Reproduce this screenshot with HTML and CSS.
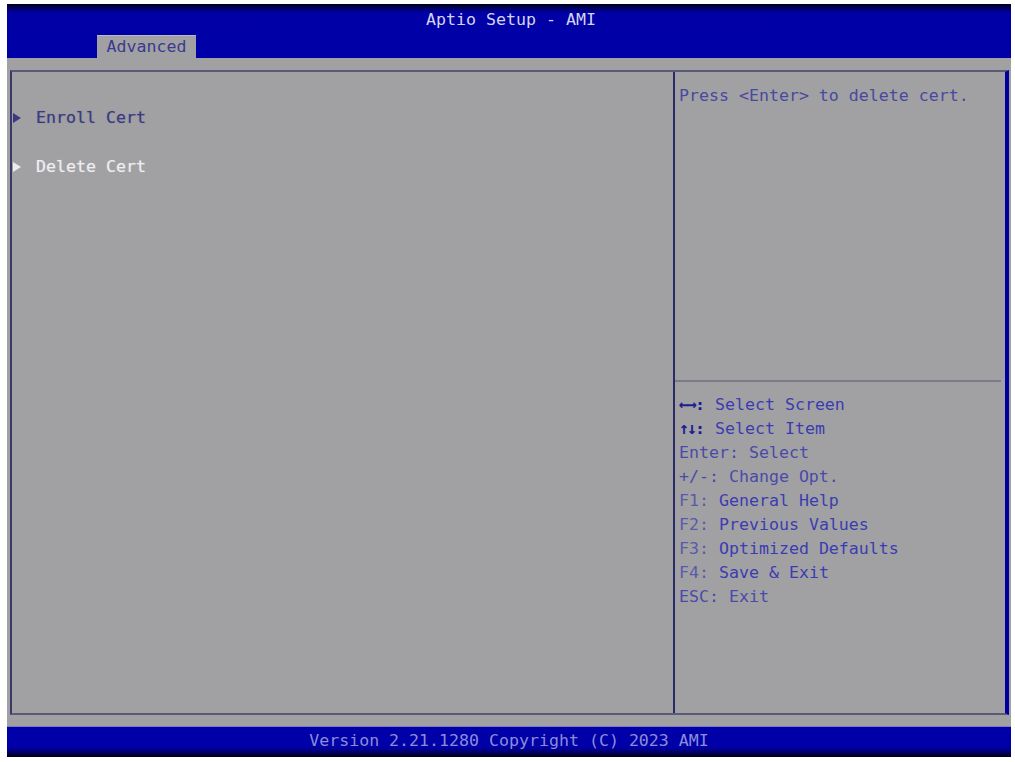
FILE: index.html
```html
<!DOCTYPE html>
<html lang="en">
<head>
    <meta charset="UTF-8">
    <meta name="viewport" content="width=device-width, initial-scale=1.0">
    <title>Aptio Setup - AMI</title>
    <link rel="stylesheet" href="styles.css">
</head>
<body>
    <div class="screen">
        <header class="topbar">
            <div class="title">Aptio Setup - AMI</div>
            <div class="tabs">
                <span class="tab active">Advanced</span>
            </div>
        </header>
        <main class="body">
            <div class="panel">
                <section class="menu">
                    <div class="item">
                        <svg class="arrow" viewBox="0 0 8 10"><path d="M0 0L8 5L0 10z"/></svg>
                        Enroll Cert
                    </div>
                    <div class="item selected">
                        <svg class="arrow" viewBox="0 0 8 10"><path d="M0 0L8 5L0 10z"/></svg>
                        Delete Cert
                    </div>
                </section>
                <aside class="side">
                    <div class="help">Press &lt;Enter&gt; to delete cert.</div>
                    <div class="keys">
                        <div><span class="k">&#8592;&#8594;:</span> Select Screen</div>
                        <div><span class="k">&#8593;&#8595;:</span> Select Item</div>
                        <div class="plain">Enter: Select</div>
                        <div class="plain">+/-: Change Opt.</div>
                        <div><span class="k2">F1:</span> General Help</div>
                        <div><span class="k2">F2:</span> Previous Values</div>
                        <div><span class="k2">F3:</span> Optimized Defaults</div>
                        <div><span class="k2">F4:</span> Save &amp; Exit</div>
                        <div class="plain">ESC: Exit</div>
                    </div>
                </aside>
            </div>
        </main>
        <footer class="bottombar">Version 2.21.1280 Copyright (C) 2023 AMI</footer>
    </div>
</body>
</html>
```

FILE: styles.css
```css
body {
    margin: 0;
    background: #FFFFFF;
    font-family: 'DejaVu Sans Mono', 'Liberation Mono', monospace;
    font-size: 16.6px;
}
.screen {
    width: 1004px;
    height: 753px;
    margin: 4px 0 0 7px;
    display: flex;
    flex-direction: column;
    background: #A1A1A4;
}
.topbar {
    height: 54px;
    background: linear-gradient(#000010 0, #000060 4px, #0000A6 9px, #0000A8 100%);
    display: flex;
    flex-direction: column;
    justify-content: space-between;
}
.title {
    text-align: center;
    color: #D4D4EE;
    line-height: 24px;
    padding-top: 4px;
    padding-left: 4px;
}
.tabs {
    display: flex;
    padding-left: 90px;
}
.tab {
    width: 99px;
    height: 23px;
    line-height: 24px;
    text-align: center;
    color: #3A3A90;
    background: #A1A1A4;
    box-shadow: inset 0 1px 0 #B8B8C8;
}
.body {
    flex: 1;
    padding: 12px 2px 12px 3px;
    display: flex;
}
.panel {
    flex: 1;
    display: grid;
    grid-template-columns: 663px 1fr;
    border-top: 2px solid #5A5A78;
    border-left: 2px solid #3A3A66;
    border-bottom: 2px solid #5A5A78;
    border-right: 4px solid #0000A0;
}
.menu {
    border-right: 2px solid #2A2A66;
    padding-top: 34px;
    display: flex;
    flex-direction: column;
    gap: 25px;
}
.item {
    display: flex;
    align-items: center;
    gap: 15px;
    padding-left: 1px;
    line-height: 24px;
    color: #3A3A82;
    text-shadow: 0 0 1px rgba(58, 58, 130, 0.5);
}
.item.selected {
    color: #EDEDF0;
    text-shadow: 0 0 1px rgba(255, 255, 255, 0.5);
}
.arrow {
    width: 8px;
    height: 10px;
    fill: currentColor;
}
.side {
    display: flex;
    flex-direction: column;
}
.help {
    height: 296px;
    padding: 12px 4px 0 4px;
    line-height: 24px;
    color: #4848A0;
    border-bottom: 2px solid #7A7A8A;
    margin-right: 4px;
}
.keys {
    padding: 11px 4px 0 4px;
    line-height: 24px;
    color: #3C3CB0;
}
.keys .k {
    color: #1E1E90;
    font-weight: bold;
    letter-spacing: -2px;
    margin-right: 2px;
}
.keys .k2 {
    color: #5A5AA8;
}
.keys .plain {
    color: #4A4AA8;
}
.bottombar {
    height: 30px;
    line-height: 28px;
    text-align: center;
    color: #8C8CD8;
    background: linear-gradient(#0000A8 0, #0000A8 20px, #000060 26px, #000008 30px);
    box-shadow: 0 -1px 0 #7A7AC8;
}
```
